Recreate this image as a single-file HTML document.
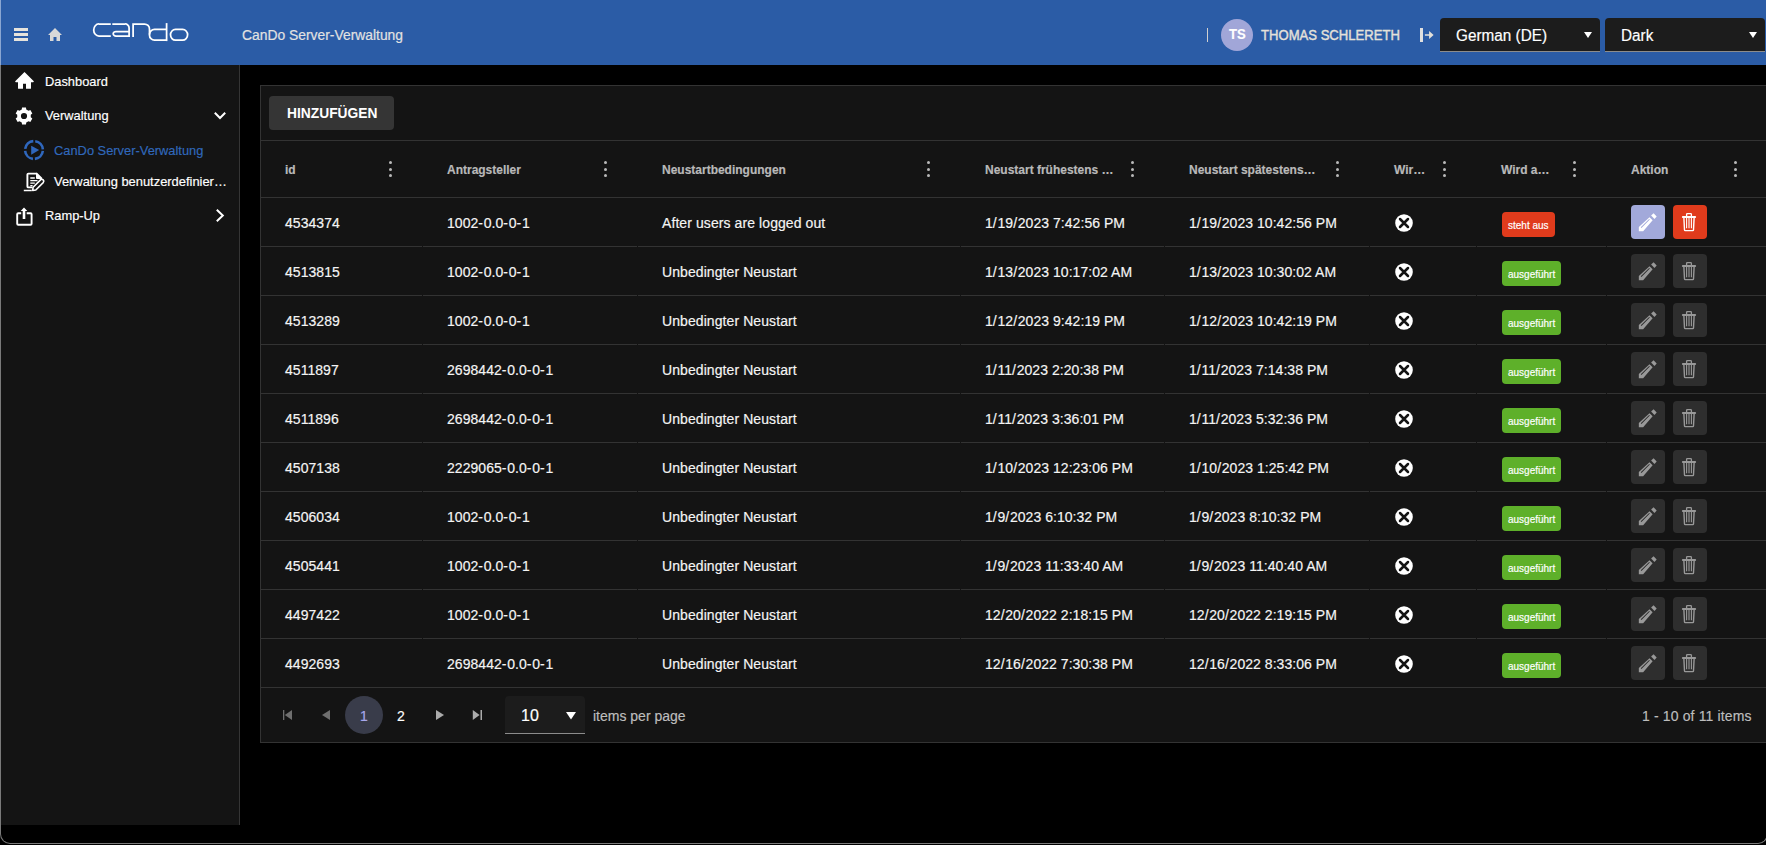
<!DOCTYPE html>
<html><head><meta charset="utf-8">
<style>
*{box-sizing:border-box;margin:0;padding:0}
html,body{width:1766px;height:845px;overflow:hidden;background:#000;font-family:"Liberation Sans",sans-serif;color:#f4f4f4}
.t{position:absolute;white-space:nowrap;line-height:1;-webkit-text-stroke-width:0.18px;}
.a{position:absolute}
svg{position:absolute;overflow:visible}
</style></head><body>

<div class="a" style="left:0;top:0;width:1768px;height:844px;border-left:1px solid #7a7a7a;border-right:1px solid #7a7a7a;border-bottom:1px solid #7a7a7a;border-radius:0 0 10px 10px;background:#000;overflow:hidden">
</div>
<div class="a" style="left:1px;top:0;width:1766px;height:65px;background:#2b5ca6"></div>
<div class="a" style="left:0;top:0;width:1px;height:65px;background:#8aa6d2"></div>
<div class="a" style="left:14px;top:28px;width:14px;height:3px;background:#e6e3dc"></div>
<div class="a" style="left:14px;top:33px;width:14px;height:3px;background:#e6e3dc"></div>
<div class="a" style="left:14px;top:38px;width:14px;height:3px;background:#e6e3dc"></div>
<svg style="left:48px;top:28px" width="14" height="13" viewBox="0 0 14 13"><path d="M7 0 L14 7 L12 7 L12 13 L8.5 13 L8.5 9 L5.5 9 L5.5 13 L2 13 L2 7 L0 7 Z" fill="#d9d9d9"/></svg>
<svg style="left:88px;top:18px" width="102" height="26" viewBox="0 0 102 26" fill="none" stroke="#fff" stroke-width="1.75">
<path d="M22.8,6 H11 A5.2,6 0 0 0 5.7,12 A5.2,6 0 0 0 11,18 H22.8"/>
<path d="M24.3,6 H37 A4,4 0 0 1 41.1,10 V18.9"/>
<path d="M41.1,13.5 H28 A2.8,2.25 0 0 0 25.2,15.75 A2.8,2.25 0 0 0 28,18 H41.1"/>
<path d="M45.1,18.9 V6 H56.5 A5,5 0 0 1 61.5,11 V17.2 A5,5 0 0 0 66.5,22.2 H78.6"/>
<path d="M78.6,11.4 H66.5 A5,5 0 0 0 61.5,16.4"/>
<path d="M78.6,5.1 V23.1"/>
<path d="M87.5,11.4 H94.6 A5,5.4 0 0 1 99.6,16.8 A5,5.4 0 0 1 94.6,22.2 H87.5 A5,5.4 0 0 1 82.5,16.8 A5,5.4 0 0 1 87.5,11.4 Z"/>
</svg>
<div class="t" style="left:242px;top:28.00px;font-size:14.490px;color:#e2e2e2;transform:scaleX(0.9570);transform-origin:0 0;">CanDo Server-Verwaltung</div>
<div class="a" style="left:1207px;top:28px;width:1px;height:14px;background:#d0d0d0"></div>
<div class="a" style="left:1221px;top:19px;width:32px;height:32px;border-radius:50%;background:#a1a6d8"></div>
<div class="t" style="left:1228.8px;top:27.00px;font-size:14.500px;color:#ffffff;font-weight:700;transform:scaleX(0.9000);transform-origin:0 0;">TS</div>
<div class="t" style="left:1261px;top:28.00px;font-size:14.000px;color:#e4e1da;transform:scaleX(0.935);transform-origin:0 0;-webkit-text-stroke-width:0.4px">THOMAS SCHLERETH</div>
<div class="a" style="left:1420px;top:28px;width:2.5px;height:14px;background:#e0e0e0"></div>
<svg style="left:1424px;top:30px" width="11" height="10" viewBox="0 0 11 10"><path d="M0.9 4.2 H5.5 V5.8 H0.9 Z M5.1 1 L9.6 4.95 L5.1 8.9 Z" fill="#e2e0da"/></svg>
<div class="a" style="left:1440px;top:18px;width:160px;height:34px;background:#1c1c1c;border-radius:4px 4px 0 0;border-bottom:1px solid #8c8c8c"></div>
<div class="t" style="left:1456px;top:28.00px;font-size:16.560px;color:#ffffff;transform:scaleX(0.9250);transform-origin:0 0;">German (DE)</div>
<svg style="left:1584px;top:32px" width="8" height="6" viewBox="0 0 8 6"><path d="M0 0 H8 L4 6 Z" fill="#fff"/></svg>
<div class="a" style="left:1605px;top:18px;width:160px;height:34px;background:#1c1c1c;border-radius:4px 4px 0 0;border-bottom:1px solid #8c8c8c"></div>
<div class="t" style="left:1621px;top:28.00px;font-size:16.560px;color:#ffffff;transform:scaleX(0.9250);transform-origin:0 0;">Dark</div>
<svg style="left:1749px;top:32px" width="8" height="6" viewBox="0 0 8 6"><path d="M0 0 H8 L4 6 Z" fill="#fff"/></svg>
<div class="a" style="left:1px;top:65px;width:239px;height:760px;background:#141414;border-right:1px solid #353535"></div>
<svg style="left:14.5px;top:72px" width="19" height="17" viewBox="0 0 19 17"><path d="M9.5 0 L18.8 9.3 Q18.9 10.3 18 10.3 H16 V16.3 Q16 16.8 15.5 16.8 H11 V11.8 H8 V16.8 H3.5 Q3 16.8 3 16.3 V10.3 H1 Q0.1 10.3 0.2 9.3 Z" fill="#fff"/></svg>
<div class="t" style="left:44.7px;top:75.00px;font-size:13.455px;color:#fff;transform:scaleX(0.9570);transform-origin:0 0;">Dashboard</div>
<svg style="left:15px;top:107.2px" width="18" height="18" viewBox="0 0 18 18"><path fill="#fff" fill-rule="evenodd" d="M6.75,2.48 L7.04,0.52 L10.96,0.52 L11.25,2.48 L13.53,3.79 L15.36,3.07 L17.32,6.46 L15.77,7.68 L15.77,10.32 L17.32,11.54 L15.36,14.93 L13.53,14.21 L11.25,15.52 L10.96,17.48 L7.04,17.48 L6.75,15.52 L4.47,14.21 L2.64,14.93 L0.68,11.54 L2.23,10.32 L2.23,7.68 L0.68,6.46 L2.64,3.07 L4.47,3.79 Z M12.1,9 A3.1,3.1 0 1 0 5.9,9 A3.1,3.1 0 1 0 12.1,9 Z"/></svg>
<div class="t" style="left:44.7px;top:109.00px;font-size:13.455px;color:#fff;transform:scaleX(0.9570);transform-origin:0 0;">Verwaltung</div>
<svg style="left:214px;top:112px" width="12" height="7" viewBox="0 0 12 7"><path d="M0.8 0.8 L6 6 L11.2 0.8" fill="none" stroke="#fff" stroke-width="2"/></svg>
<svg style="left:24px;top:140px" width="20" height="20" viewBox="0 0 20 20"><circle cx="10" cy="10" r="8.9" fill="none" stroke="#2f67bd" stroke-width="2.6" stroke-dasharray="11.98 2" stroke-dashoffset="12.98"/><path d="M7.2 5.7 L15.2 10 L7.2 14.8 Z" fill="#2f67bd"/></svg>
<div class="t" style="left:54px;top:144.00px;font-size:13.455px;color:#3068bb;transform:scaleX(0.9570);transform-origin:0 0;">CanDo Server-Verwaltung</div>
<svg style="left:23px;top:171px" width="23" height="22" viewBox="0 0 23 22"><path d="M9.4 16.4 H5.4 Q4.4 16.4 4.4 15.4 V3.6 Q4.4 2.6 5.4 2.6 H13.7 L18.2 7.1 V10.2" fill="none" stroke="#fff" stroke-width="1.9"/><path d="M13 1.6 L19.3 7.9 H14 Q13 7.9 13 6.9 Z" fill="#fff"/><path d="M7.3 7 H11.8 M7.3 9.6 H14.5 M7.3 12.2 H11.8 M7.3 14.7 H9.6" stroke="#fff" stroke-width="1.3"/><path d="M0.8 19.5 H8.8" stroke="#fff" stroke-width="1.5"/><path d="M9.7 19.4 L10.1 16.3 L17.5 8.9 A1.91 1.91 0 0 1 20.2 11.6 L12.8 19 Z" fill="#141414" stroke="#fff" stroke-width="1.6" stroke-linejoin="round"/></svg>
<div class="t" style="left:54px;top:175.00px;font-size:13.455px;color:#fff;transform:scaleX(0.9600);transform-origin:0 0;">Verwaltung benutzerdefinier…</div>
<svg style="left:15px;top:207px" width="18" height="20" viewBox="0 0 18 20"><path d="M6.2 6.3 H3.2 Q2.2 6.3 2.2 7.3 V16.8 Q2.2 17.8 3.2 17.8 H15.6 Q16.6 17.8 16.6 16.8 V7.3 Q16.6 6.3 15.6 6.3 H11.7" fill="none" stroke="#fff" stroke-width="1.9"/><path d="M9 0.6 L12.3 4 H10.3 V12 H7.7 V4 H5.7 Z" fill="#fff"/></svg>
<div class="t" style="left:44.7px;top:209.00px;font-size:13.455px;color:#fff;transform:scaleX(0.9570);transform-origin:0 0;">Ramp-Up</div>
<svg style="left:216px;top:209px" width="8" height="13" viewBox="0 0 8 13"><path d="M0.8 0.8 L6.8 6.5 L0.8 12.2" fill="none" stroke="#fff" stroke-width="2"/></svg>
<div class="a" style="left:260px;top:85px;width:1520px;height:658px;background:#141414;border:1px solid #333333"></div>
<div class="a" style="left:269px;top:96px;width:125px;height:34px;background:#353535;border-radius:4px"></div>
<div class="t" style="left:286.6px;top:106.00px;font-size:14.600px;color:#ffffff;font-weight:700;transform:scaleX(0.945);transform-origin:0 0;-webkit-text-stroke-width:0">HINZUFÜGEN</div>
<div class="a" style="left:261px;top:140px;width:1510px;height:1px;background:#333333"></div>
<div class="a" style="left:261px;top:197px;width:1510px;height:1px;background:#333333"></div>
<div class="a" style="left:261px;top:246px;width:1510px;height:1px;background:#333333"></div>
<div class="a" style="left:261px;top:295px;width:1510px;height:1px;background:#333333"></div>
<div class="a" style="left:261px;top:344px;width:1510px;height:1px;background:#333333"></div>
<div class="a" style="left:261px;top:393px;width:1510px;height:1px;background:#333333"></div>
<div class="a" style="left:261px;top:442px;width:1510px;height:1px;background:#333333"></div>
<div class="a" style="left:261px;top:491px;width:1510px;height:1px;background:#333333"></div>
<div class="a" style="left:261px;top:540px;width:1510px;height:1px;background:#333333"></div>
<div class="a" style="left:261px;top:589px;width:1510px;height:1px;background:#333333"></div>
<div class="a" style="left:261px;top:638px;width:1510px;height:1px;background:#333333"></div>
<div class="a" style="left:261px;top:687px;width:1510px;height:1px;background:#333333"></div>
<div class="a" style="left:422px;top:246px;width:1px;height:1px;background:#141414"></div>
<div class="a" style="left:637px;top:246px;width:1px;height:1px;background:#141414"></div>
<div class="a" style="left:960px;top:246px;width:1px;height:1px;background:#141414"></div>
<div class="a" style="left:1164px;top:246px;width:1px;height:1px;background:#141414"></div>
<div class="a" style="left:1369px;top:246px;width:1px;height:1px;background:#141414"></div>
<div class="a" style="left:1476px;top:246px;width:1px;height:1px;background:#141414"></div>
<div class="a" style="left:1606px;top:246px;width:1px;height:1px;background:#141414"></div>
<div class="a" style="left:422px;top:295px;width:1px;height:1px;background:#141414"></div>
<div class="a" style="left:637px;top:295px;width:1px;height:1px;background:#141414"></div>
<div class="a" style="left:960px;top:295px;width:1px;height:1px;background:#141414"></div>
<div class="a" style="left:1164px;top:295px;width:1px;height:1px;background:#141414"></div>
<div class="a" style="left:1369px;top:295px;width:1px;height:1px;background:#141414"></div>
<div class="a" style="left:1476px;top:295px;width:1px;height:1px;background:#141414"></div>
<div class="a" style="left:1606px;top:295px;width:1px;height:1px;background:#141414"></div>
<div class="a" style="left:422px;top:344px;width:1px;height:1px;background:#141414"></div>
<div class="a" style="left:637px;top:344px;width:1px;height:1px;background:#141414"></div>
<div class="a" style="left:960px;top:344px;width:1px;height:1px;background:#141414"></div>
<div class="a" style="left:1164px;top:344px;width:1px;height:1px;background:#141414"></div>
<div class="a" style="left:1369px;top:344px;width:1px;height:1px;background:#141414"></div>
<div class="a" style="left:1476px;top:344px;width:1px;height:1px;background:#141414"></div>
<div class="a" style="left:1606px;top:344px;width:1px;height:1px;background:#141414"></div>
<div class="a" style="left:422px;top:393px;width:1px;height:1px;background:#141414"></div>
<div class="a" style="left:637px;top:393px;width:1px;height:1px;background:#141414"></div>
<div class="a" style="left:960px;top:393px;width:1px;height:1px;background:#141414"></div>
<div class="a" style="left:1164px;top:393px;width:1px;height:1px;background:#141414"></div>
<div class="a" style="left:1369px;top:393px;width:1px;height:1px;background:#141414"></div>
<div class="a" style="left:1476px;top:393px;width:1px;height:1px;background:#141414"></div>
<div class="a" style="left:1606px;top:393px;width:1px;height:1px;background:#141414"></div>
<div class="a" style="left:422px;top:442px;width:1px;height:1px;background:#141414"></div>
<div class="a" style="left:637px;top:442px;width:1px;height:1px;background:#141414"></div>
<div class="a" style="left:960px;top:442px;width:1px;height:1px;background:#141414"></div>
<div class="a" style="left:1164px;top:442px;width:1px;height:1px;background:#141414"></div>
<div class="a" style="left:1369px;top:442px;width:1px;height:1px;background:#141414"></div>
<div class="a" style="left:1476px;top:442px;width:1px;height:1px;background:#141414"></div>
<div class="a" style="left:1606px;top:442px;width:1px;height:1px;background:#141414"></div>
<div class="a" style="left:422px;top:491px;width:1px;height:1px;background:#141414"></div>
<div class="a" style="left:637px;top:491px;width:1px;height:1px;background:#141414"></div>
<div class="a" style="left:960px;top:491px;width:1px;height:1px;background:#141414"></div>
<div class="a" style="left:1164px;top:491px;width:1px;height:1px;background:#141414"></div>
<div class="a" style="left:1369px;top:491px;width:1px;height:1px;background:#141414"></div>
<div class="a" style="left:1476px;top:491px;width:1px;height:1px;background:#141414"></div>
<div class="a" style="left:1606px;top:491px;width:1px;height:1px;background:#141414"></div>
<div class="a" style="left:422px;top:540px;width:1px;height:1px;background:#141414"></div>
<div class="a" style="left:637px;top:540px;width:1px;height:1px;background:#141414"></div>
<div class="a" style="left:960px;top:540px;width:1px;height:1px;background:#141414"></div>
<div class="a" style="left:1164px;top:540px;width:1px;height:1px;background:#141414"></div>
<div class="a" style="left:1369px;top:540px;width:1px;height:1px;background:#141414"></div>
<div class="a" style="left:1476px;top:540px;width:1px;height:1px;background:#141414"></div>
<div class="a" style="left:1606px;top:540px;width:1px;height:1px;background:#141414"></div>
<div class="a" style="left:422px;top:589px;width:1px;height:1px;background:#141414"></div>
<div class="a" style="left:637px;top:589px;width:1px;height:1px;background:#141414"></div>
<div class="a" style="left:960px;top:589px;width:1px;height:1px;background:#141414"></div>
<div class="a" style="left:1164px;top:589px;width:1px;height:1px;background:#141414"></div>
<div class="a" style="left:1369px;top:589px;width:1px;height:1px;background:#141414"></div>
<div class="a" style="left:1476px;top:589px;width:1px;height:1px;background:#141414"></div>
<div class="a" style="left:1606px;top:589px;width:1px;height:1px;background:#141414"></div>
<div class="a" style="left:422px;top:638px;width:1px;height:1px;background:#141414"></div>
<div class="a" style="left:637px;top:638px;width:1px;height:1px;background:#141414"></div>
<div class="a" style="left:960px;top:638px;width:1px;height:1px;background:#141414"></div>
<div class="a" style="left:1164px;top:638px;width:1px;height:1px;background:#141414"></div>
<div class="a" style="left:1369px;top:638px;width:1px;height:1px;background:#141414"></div>
<div class="a" style="left:1476px;top:638px;width:1px;height:1px;background:#141414"></div>
<div class="a" style="left:1606px;top:638px;width:1px;height:1px;background:#141414"></div>
<div class="t" style="left:285px;top:164.00px;font-size:12.420px;color:#b9b9b9;font-weight:700;transform:scaleX(0.9662);transform-origin:0 0;">id</div>
<div class="a" style="left:389.3px;top:161.2px;width:3.2px;height:3.2px;border-radius:50%;background:#b9b9b9"></div>
<div class="a" style="left:389.3px;top:167.5px;width:3.2px;height:3.2px;border-radius:50%;background:#b9b9b9"></div>
<div class="a" style="left:389.3px;top:173.79999999999998px;width:3.2px;height:3.2px;border-radius:50%;background:#b9b9b9"></div>
<div class="t" style="left:447px;top:164.00px;font-size:12.420px;color:#b9b9b9;font-weight:700;transform:scaleX(0.9662);transform-origin:0 0;">Antragsteller</div>
<div class="a" style="left:604.3px;top:161.2px;width:3.2px;height:3.2px;border-radius:50%;background:#b9b9b9"></div>
<div class="a" style="left:604.3px;top:167.5px;width:3.2px;height:3.2px;border-radius:50%;background:#b9b9b9"></div>
<div class="a" style="left:604.3px;top:173.79999999999998px;width:3.2px;height:3.2px;border-radius:50%;background:#b9b9b9"></div>
<div class="t" style="left:662px;top:164.00px;font-size:12.420px;color:#b9b9b9;font-weight:700;transform:scaleX(0.9662);transform-origin:0 0;">Neustartbedingungen</div>
<div class="a" style="left:927.3px;top:161.2px;width:3.2px;height:3.2px;border-radius:50%;background:#b9b9b9"></div>
<div class="a" style="left:927.3px;top:167.5px;width:3.2px;height:3.2px;border-radius:50%;background:#b9b9b9"></div>
<div class="a" style="left:927.3px;top:173.79999999999998px;width:3.2px;height:3.2px;border-radius:50%;background:#b9b9b9"></div>
<div class="t" style="left:985px;top:164.00px;font-size:12.420px;color:#b9b9b9;font-weight:700;transform:scaleX(0.9662);transform-origin:0 0;">Neustart frühestens …</div>
<div class="a" style="left:1131.3px;top:161.2px;width:3.2px;height:3.2px;border-radius:50%;background:#b9b9b9"></div>
<div class="a" style="left:1131.3px;top:167.5px;width:3.2px;height:3.2px;border-radius:50%;background:#b9b9b9"></div>
<div class="a" style="left:1131.3px;top:173.79999999999998px;width:3.2px;height:3.2px;border-radius:50%;background:#b9b9b9"></div>
<div class="t" style="left:1189px;top:164.00px;font-size:12.420px;color:#b9b9b9;font-weight:700;transform:scaleX(0.9662);transform-origin:0 0;">Neustart spätestens…</div>
<div class="a" style="left:1336.3px;top:161.2px;width:3.2px;height:3.2px;border-radius:50%;background:#b9b9b9"></div>
<div class="a" style="left:1336.3px;top:167.5px;width:3.2px;height:3.2px;border-radius:50%;background:#b9b9b9"></div>
<div class="a" style="left:1336.3px;top:173.79999999999998px;width:3.2px;height:3.2px;border-radius:50%;background:#b9b9b9"></div>
<div class="t" style="left:1394px;top:164.00px;font-size:12.420px;color:#b9b9b9;font-weight:700;transform:scaleX(0.9662);transform-origin:0 0;">Wir…</div>
<div class="a" style="left:1443.3px;top:161.2px;width:3.2px;height:3.2px;border-radius:50%;background:#b9b9b9"></div>
<div class="a" style="left:1443.3px;top:167.5px;width:3.2px;height:3.2px;border-radius:50%;background:#b9b9b9"></div>
<div class="a" style="left:1443.3px;top:173.79999999999998px;width:3.2px;height:3.2px;border-radius:50%;background:#b9b9b9"></div>
<div class="t" style="left:1501px;top:164.00px;font-size:12.420px;color:#b9b9b9;font-weight:700;transform:scaleX(0.9662);transform-origin:0 0;">Wird a…</div>
<div class="a" style="left:1573.3px;top:161.2px;width:3.2px;height:3.2px;border-radius:50%;background:#b9b9b9"></div>
<div class="a" style="left:1573.3px;top:167.5px;width:3.2px;height:3.2px;border-radius:50%;background:#b9b9b9"></div>
<div class="a" style="left:1573.3px;top:173.79999999999998px;width:3.2px;height:3.2px;border-radius:50%;background:#b9b9b9"></div>
<div class="t" style="left:1631px;top:164.00px;font-size:12.420px;color:#b9b9b9;font-weight:700;transform:scaleX(0.9662);transform-origin:0 0;">Aktion</div>
<div class="a" style="left:1734.3px;top:161.2px;width:3.2px;height:3.2px;border-radius:50%;background:#b9b9b9"></div>
<div class="a" style="left:1734.3px;top:167.5px;width:3.2px;height:3.2px;border-radius:50%;background:#b9b9b9"></div>
<div class="a" style="left:1734.3px;top:173.79999999999998px;width:3.2px;height:3.2px;border-radius:50%;background:#b9b9b9"></div>
<div class="t" style="left:285px;top:216.00px;font-size:14.490px;color:#f4f4f4;transform:scaleX(0.9662);transform-origin:0 0;letter-spacing:0.05px">4534374</div>
<div class="t" style="left:447px;top:216.00px;font-size:14.490px;color:#f4f4f4;transform:scaleX(0.9662);transform-origin:0 0;letter-spacing:0.05px">1002<span style="letter-spacing:0.75px">-</span>0.0<span style="letter-spacing:0.75px">-</span>0<span style="letter-spacing:0.75px">-</span>1</div>
<div class="t" style="left:662px;top:216.00px;font-size:14.490px;color:#f4f4f4;transform:scaleX(0.9662);transform-origin:0 0;letter-spacing:0.09px">After users are logged out</div>
<div class="t" style="left:985px;top:216.00px;font-size:14.490px;color:#f4f4f4;transform:scaleX(0.9662);transform-origin:0 0;letter-spacing:0.05px">1<span style="letter-spacing:0.75px">/</span>19<span style="letter-spacing:0.75px">/</span>2023 7:42:56 PM</div>
<div class="t" style="left:1189px;top:216.00px;font-size:14.490px;color:#f4f4f4;transform:scaleX(0.9662);transform-origin:0 0;letter-spacing:0.05px">1<span style="letter-spacing:0.75px">/</span>19<span style="letter-spacing:0.75px">/</span>2023 10:42:56 PM</div>
<svg style="left:1395px;top:214px" width="18" height="18" viewBox="0 0 18 18"><circle cx="9" cy="9" r="8.8" fill="#fff"/><path d="M5 5 L13 13 M13 5 L5 13" stroke="#141414" stroke-width="2.5" stroke-linecap="round"/></svg>
<div class="a" style="left:1502px;top:212px;width:53px;height:25px;background:#e03b1c;border-radius:4px"></div>
<div class="t" style="left:1507.6px;top:221.00px;font-size:10.350px;color:#fff;transform:scaleX(0.9662);transform-origin:0 0;">steht aus</div>
<div class="a" style="left:1631px;top:205px;width:34px;height:34px;background:#a2a9da;border-radius:4px"></div>
<div class="a" style="left:1673px;top:205px;width:34px;height:34px;background:#e03b1c;border-radius:4px"></div>
<svg style="left:1639px;top:213px" width="18" height="19" viewBox="0 0 18 19"><path fill-rule="evenodd" d="M10.48 4.14 L13.65 7.31 L4.14 18.18 H-0.17 V14.1 Z M1.75 14.3 L10.15 5.9 L10.85 6.6 L2.45 15 Z" fill="#ffffff"/><path d="M14.6 0.3 L17.7 3.5 L15.5 6 L12.1 2.6 Z" fill="#ffffff"/></svg>
<svg style="left:1682px;top:213px" width="14" height="19" viewBox="0 0 14 19" fill="none" stroke="#ffffff"><path d="M4.6 3 V1.4 Q4.6 0.6 5.4 0.6 H8.6 Q9.4 0.6 9.4 1.4 V3" stroke-width="1.3"/><path d="M0.9 4 H13.1" stroke-width="2" stroke-linecap="round"/><path d="M1.9 5 L2.5 17 Q2.6 17.6 3.2 17.6 H10.8 Q11.4 17.6 11.5 17 L12.1 5" stroke-width="1.4"/><path d="M4.6 5 V15.2 M7 5 V15.2 M9.4 5 V15.2" stroke-width="1.1"/></svg>
<div class="t" style="left:285px;top:265.00px;font-size:14.490px;color:#f4f4f4;transform:scaleX(0.9662);transform-origin:0 0;letter-spacing:0.05px">4513815</div>
<div class="t" style="left:447px;top:265.00px;font-size:14.490px;color:#f4f4f4;transform:scaleX(0.9662);transform-origin:0 0;letter-spacing:0.05px">1002<span style="letter-spacing:0.75px">-</span>0.0<span style="letter-spacing:0.75px">-</span>0<span style="letter-spacing:0.75px">-</span>1</div>
<div class="t" style="left:662px;top:265.00px;font-size:14.490px;color:#f4f4f4;transform:scaleX(0.9662);transform-origin:0 0;letter-spacing:0.09px">Unbedingter Neustart</div>
<div class="t" style="left:985px;top:265.00px;font-size:14.490px;color:#f4f4f4;transform:scaleX(0.9662);transform-origin:0 0;letter-spacing:0.05px">1<span style="letter-spacing:0.75px">/</span>13<span style="letter-spacing:0.75px">/</span>2023 10:17:02 AM</div>
<div class="t" style="left:1189px;top:265.00px;font-size:14.490px;color:#f4f4f4;transform:scaleX(0.9662);transform-origin:0 0;letter-spacing:0.05px">1<span style="letter-spacing:0.75px">/</span>13<span style="letter-spacing:0.75px">/</span>2023 10:30:02 AM</div>
<svg style="left:1395px;top:263px" width="18" height="18" viewBox="0 0 18 18"><circle cx="9" cy="9" r="8.8" fill="#fff"/><path d="M5 5 L13 13 M13 5 L5 13" stroke="#141414" stroke-width="2.5" stroke-linecap="round"/></svg>
<div class="a" style="left:1502px;top:261px;width:59px;height:25px;background:#5eb02a;border-radius:4px"></div>
<div class="t" style="left:1507.6px;top:270.00px;font-size:10.350px;color:#fff;transform:scaleX(0.9662);transform-origin:0 0;">ausgeführt</div>
<div class="a" style="left:1631px;top:254px;width:34px;height:34px;background:#2e2e2e;border-radius:4px"></div>
<div class="a" style="left:1673px;top:254px;width:34px;height:34px;background:#2e2e2e;border-radius:4px"></div>
<svg style="left:1639px;top:262px" width="18" height="19" viewBox="0 0 18 19"><path fill-rule="evenodd" d="M10.48 4.14 L13.65 7.31 L4.14 18.18 H-0.17 V14.1 Z M1.75 14.3 L10.15 5.9 L10.85 6.6 L2.45 15 Z" fill="#999999"/><path d="M14.6 0.3 L17.7 3.5 L15.5 6 L12.1 2.6 Z" fill="#999999"/></svg>
<svg style="left:1682px;top:262px" width="14" height="19" viewBox="0 0 14 19" fill="none" stroke="#999999"><path d="M4.6 3 V1.4 Q4.6 0.6 5.4 0.6 H8.6 Q9.4 0.6 9.4 1.4 V3" stroke-width="1.3"/><path d="M0.9 4 H13.1" stroke-width="2" stroke-linecap="round"/><path d="M1.9 5 L2.5 17 Q2.6 17.6 3.2 17.6 H10.8 Q11.4 17.6 11.5 17 L12.1 5" stroke-width="1.4"/><path d="M4.6 5 V15.2 M7 5 V15.2 M9.4 5 V15.2" stroke-width="1.1"/></svg>
<div class="t" style="left:285px;top:314.00px;font-size:14.490px;color:#f4f4f4;transform:scaleX(0.9662);transform-origin:0 0;letter-spacing:0.05px">4513289</div>
<div class="t" style="left:447px;top:314.00px;font-size:14.490px;color:#f4f4f4;transform:scaleX(0.9662);transform-origin:0 0;letter-spacing:0.05px">1002<span style="letter-spacing:0.75px">-</span>0.0<span style="letter-spacing:0.75px">-</span>0<span style="letter-spacing:0.75px">-</span>1</div>
<div class="t" style="left:662px;top:314.00px;font-size:14.490px;color:#f4f4f4;transform:scaleX(0.9662);transform-origin:0 0;letter-spacing:0.09px">Unbedingter Neustart</div>
<div class="t" style="left:985px;top:314.00px;font-size:14.490px;color:#f4f4f4;transform:scaleX(0.9662);transform-origin:0 0;letter-spacing:0.05px">1<span style="letter-spacing:0.75px">/</span>12<span style="letter-spacing:0.75px">/</span>2023 9:42:19 PM</div>
<div class="t" style="left:1189px;top:314.00px;font-size:14.490px;color:#f4f4f4;transform:scaleX(0.9662);transform-origin:0 0;letter-spacing:0.05px">1<span style="letter-spacing:0.75px">/</span>12<span style="letter-spacing:0.75px">/</span>2023 10:42:19 PM</div>
<svg style="left:1395px;top:312px" width="18" height="18" viewBox="0 0 18 18"><circle cx="9" cy="9" r="8.8" fill="#fff"/><path d="M5 5 L13 13 M13 5 L5 13" stroke="#141414" stroke-width="2.5" stroke-linecap="round"/></svg>
<div class="a" style="left:1502px;top:310px;width:59px;height:25px;background:#5eb02a;border-radius:4px"></div>
<div class="t" style="left:1507.6px;top:319.00px;font-size:10.350px;color:#fff;transform:scaleX(0.9662);transform-origin:0 0;">ausgeführt</div>
<div class="a" style="left:1631px;top:303px;width:34px;height:34px;background:#2e2e2e;border-radius:4px"></div>
<div class="a" style="left:1673px;top:303px;width:34px;height:34px;background:#2e2e2e;border-radius:4px"></div>
<svg style="left:1639px;top:311px" width="18" height="19" viewBox="0 0 18 19"><path fill-rule="evenodd" d="M10.48 4.14 L13.65 7.31 L4.14 18.18 H-0.17 V14.1 Z M1.75 14.3 L10.15 5.9 L10.85 6.6 L2.45 15 Z" fill="#999999"/><path d="M14.6 0.3 L17.7 3.5 L15.5 6 L12.1 2.6 Z" fill="#999999"/></svg>
<svg style="left:1682px;top:311px" width="14" height="19" viewBox="0 0 14 19" fill="none" stroke="#999999"><path d="M4.6 3 V1.4 Q4.6 0.6 5.4 0.6 H8.6 Q9.4 0.6 9.4 1.4 V3" stroke-width="1.3"/><path d="M0.9 4 H13.1" stroke-width="2" stroke-linecap="round"/><path d="M1.9 5 L2.5 17 Q2.6 17.6 3.2 17.6 H10.8 Q11.4 17.6 11.5 17 L12.1 5" stroke-width="1.4"/><path d="M4.6 5 V15.2 M7 5 V15.2 M9.4 5 V15.2" stroke-width="1.1"/></svg>
<div class="t" style="left:285px;top:363.00px;font-size:14.490px;color:#f4f4f4;transform:scaleX(0.9662);transform-origin:0 0;letter-spacing:0.05px">4511897</div>
<div class="t" style="left:447px;top:363.00px;font-size:14.490px;color:#f4f4f4;transform:scaleX(0.9662);transform-origin:0 0;letter-spacing:0.05px">2698442<span style="letter-spacing:0.75px">-</span>0.0<span style="letter-spacing:0.75px">-</span>0<span style="letter-spacing:0.75px">-</span>1</div>
<div class="t" style="left:662px;top:363.00px;font-size:14.490px;color:#f4f4f4;transform:scaleX(0.9662);transform-origin:0 0;letter-spacing:0.09px">Unbedingter Neustart</div>
<div class="t" style="left:985px;top:363.00px;font-size:14.490px;color:#f4f4f4;transform:scaleX(0.9662);transform-origin:0 0;letter-spacing:0.05px">1<span style="letter-spacing:0.75px">/</span>11<span style="letter-spacing:0.75px">/</span>2023 2:20:38 PM</div>
<div class="t" style="left:1189px;top:363.00px;font-size:14.490px;color:#f4f4f4;transform:scaleX(0.9662);transform-origin:0 0;letter-spacing:0.05px">1<span style="letter-spacing:0.75px">/</span>11<span style="letter-spacing:0.75px">/</span>2023 7:14:38 PM</div>
<svg style="left:1395px;top:361px" width="18" height="18" viewBox="0 0 18 18"><circle cx="9" cy="9" r="8.8" fill="#fff"/><path d="M5 5 L13 13 M13 5 L5 13" stroke="#141414" stroke-width="2.5" stroke-linecap="round"/></svg>
<div class="a" style="left:1502px;top:359px;width:59px;height:25px;background:#5eb02a;border-radius:4px"></div>
<div class="t" style="left:1507.6px;top:368.00px;font-size:10.350px;color:#fff;transform:scaleX(0.9662);transform-origin:0 0;">ausgeführt</div>
<div class="a" style="left:1631px;top:352px;width:34px;height:34px;background:#2e2e2e;border-radius:4px"></div>
<div class="a" style="left:1673px;top:352px;width:34px;height:34px;background:#2e2e2e;border-radius:4px"></div>
<svg style="left:1639px;top:360px" width="18" height="19" viewBox="0 0 18 19"><path fill-rule="evenodd" d="M10.48 4.14 L13.65 7.31 L4.14 18.18 H-0.17 V14.1 Z M1.75 14.3 L10.15 5.9 L10.85 6.6 L2.45 15 Z" fill="#999999"/><path d="M14.6 0.3 L17.7 3.5 L15.5 6 L12.1 2.6 Z" fill="#999999"/></svg>
<svg style="left:1682px;top:360px" width="14" height="19" viewBox="0 0 14 19" fill="none" stroke="#999999"><path d="M4.6 3 V1.4 Q4.6 0.6 5.4 0.6 H8.6 Q9.4 0.6 9.4 1.4 V3" stroke-width="1.3"/><path d="M0.9 4 H13.1" stroke-width="2" stroke-linecap="round"/><path d="M1.9 5 L2.5 17 Q2.6 17.6 3.2 17.6 H10.8 Q11.4 17.6 11.5 17 L12.1 5" stroke-width="1.4"/><path d="M4.6 5 V15.2 M7 5 V15.2 M9.4 5 V15.2" stroke-width="1.1"/></svg>
<div class="t" style="left:285px;top:412.00px;font-size:14.490px;color:#f4f4f4;transform:scaleX(0.9662);transform-origin:0 0;letter-spacing:0.05px">4511896</div>
<div class="t" style="left:447px;top:412.00px;font-size:14.490px;color:#f4f4f4;transform:scaleX(0.9662);transform-origin:0 0;letter-spacing:0.05px">2698442<span style="letter-spacing:0.75px">-</span>0.0<span style="letter-spacing:0.75px">-</span>0<span style="letter-spacing:0.75px">-</span>1</div>
<div class="t" style="left:662px;top:412.00px;font-size:14.490px;color:#f4f4f4;transform:scaleX(0.9662);transform-origin:0 0;letter-spacing:0.09px">Unbedingter Neustart</div>
<div class="t" style="left:985px;top:412.00px;font-size:14.490px;color:#f4f4f4;transform:scaleX(0.9662);transform-origin:0 0;letter-spacing:0.05px">1<span style="letter-spacing:0.75px">/</span>11<span style="letter-spacing:0.75px">/</span>2023 3:36:01 PM</div>
<div class="t" style="left:1189px;top:412.00px;font-size:14.490px;color:#f4f4f4;transform:scaleX(0.9662);transform-origin:0 0;letter-spacing:0.05px">1<span style="letter-spacing:0.75px">/</span>11<span style="letter-spacing:0.75px">/</span>2023 5:32:36 PM</div>
<svg style="left:1395px;top:410px" width="18" height="18" viewBox="0 0 18 18"><circle cx="9" cy="9" r="8.8" fill="#fff"/><path d="M5 5 L13 13 M13 5 L5 13" stroke="#141414" stroke-width="2.5" stroke-linecap="round"/></svg>
<div class="a" style="left:1502px;top:408px;width:59px;height:25px;background:#5eb02a;border-radius:4px"></div>
<div class="t" style="left:1507.6px;top:417.00px;font-size:10.350px;color:#fff;transform:scaleX(0.9662);transform-origin:0 0;">ausgeführt</div>
<div class="a" style="left:1631px;top:401px;width:34px;height:34px;background:#2e2e2e;border-radius:4px"></div>
<div class="a" style="left:1673px;top:401px;width:34px;height:34px;background:#2e2e2e;border-radius:4px"></div>
<svg style="left:1639px;top:409px" width="18" height="19" viewBox="0 0 18 19"><path fill-rule="evenodd" d="M10.48 4.14 L13.65 7.31 L4.14 18.18 H-0.17 V14.1 Z M1.75 14.3 L10.15 5.9 L10.85 6.6 L2.45 15 Z" fill="#999999"/><path d="M14.6 0.3 L17.7 3.5 L15.5 6 L12.1 2.6 Z" fill="#999999"/></svg>
<svg style="left:1682px;top:409px" width="14" height="19" viewBox="0 0 14 19" fill="none" stroke="#999999"><path d="M4.6 3 V1.4 Q4.6 0.6 5.4 0.6 H8.6 Q9.4 0.6 9.4 1.4 V3" stroke-width="1.3"/><path d="M0.9 4 H13.1" stroke-width="2" stroke-linecap="round"/><path d="M1.9 5 L2.5 17 Q2.6 17.6 3.2 17.6 H10.8 Q11.4 17.6 11.5 17 L12.1 5" stroke-width="1.4"/><path d="M4.6 5 V15.2 M7 5 V15.2 M9.4 5 V15.2" stroke-width="1.1"/></svg>
<div class="t" style="left:285px;top:461.00px;font-size:14.490px;color:#f4f4f4;transform:scaleX(0.9662);transform-origin:0 0;letter-spacing:0.05px">4507138</div>
<div class="t" style="left:447px;top:461.00px;font-size:14.490px;color:#f4f4f4;transform:scaleX(0.9662);transform-origin:0 0;letter-spacing:0.05px">2229065<span style="letter-spacing:0.75px">-</span>0.0<span style="letter-spacing:0.75px">-</span>0<span style="letter-spacing:0.75px">-</span>1</div>
<div class="t" style="left:662px;top:461.00px;font-size:14.490px;color:#f4f4f4;transform:scaleX(0.9662);transform-origin:0 0;letter-spacing:0.09px">Unbedingter Neustart</div>
<div class="t" style="left:985px;top:461.00px;font-size:14.490px;color:#f4f4f4;transform:scaleX(0.9662);transform-origin:0 0;letter-spacing:0.05px">1<span style="letter-spacing:0.75px">/</span>10<span style="letter-spacing:0.75px">/</span>2023 12:23:06 PM</div>
<div class="t" style="left:1189px;top:461.00px;font-size:14.490px;color:#f4f4f4;transform:scaleX(0.9662);transform-origin:0 0;letter-spacing:0.05px">1<span style="letter-spacing:0.75px">/</span>10<span style="letter-spacing:0.75px">/</span>2023 1:25:42 PM</div>
<svg style="left:1395px;top:459px" width="18" height="18" viewBox="0 0 18 18"><circle cx="9" cy="9" r="8.8" fill="#fff"/><path d="M5 5 L13 13 M13 5 L5 13" stroke="#141414" stroke-width="2.5" stroke-linecap="round"/></svg>
<div class="a" style="left:1502px;top:457px;width:59px;height:25px;background:#5eb02a;border-radius:4px"></div>
<div class="t" style="left:1507.6px;top:466.00px;font-size:10.350px;color:#fff;transform:scaleX(0.9662);transform-origin:0 0;">ausgeführt</div>
<div class="a" style="left:1631px;top:450px;width:34px;height:34px;background:#2e2e2e;border-radius:4px"></div>
<div class="a" style="left:1673px;top:450px;width:34px;height:34px;background:#2e2e2e;border-radius:4px"></div>
<svg style="left:1639px;top:458px" width="18" height="19" viewBox="0 0 18 19"><path fill-rule="evenodd" d="M10.48 4.14 L13.65 7.31 L4.14 18.18 H-0.17 V14.1 Z M1.75 14.3 L10.15 5.9 L10.85 6.6 L2.45 15 Z" fill="#999999"/><path d="M14.6 0.3 L17.7 3.5 L15.5 6 L12.1 2.6 Z" fill="#999999"/></svg>
<svg style="left:1682px;top:458px" width="14" height="19" viewBox="0 0 14 19" fill="none" stroke="#999999"><path d="M4.6 3 V1.4 Q4.6 0.6 5.4 0.6 H8.6 Q9.4 0.6 9.4 1.4 V3" stroke-width="1.3"/><path d="M0.9 4 H13.1" stroke-width="2" stroke-linecap="round"/><path d="M1.9 5 L2.5 17 Q2.6 17.6 3.2 17.6 H10.8 Q11.4 17.6 11.5 17 L12.1 5" stroke-width="1.4"/><path d="M4.6 5 V15.2 M7 5 V15.2 M9.4 5 V15.2" stroke-width="1.1"/></svg>
<div class="t" style="left:285px;top:510.00px;font-size:14.490px;color:#f4f4f4;transform:scaleX(0.9662);transform-origin:0 0;letter-spacing:0.05px">4506034</div>
<div class="t" style="left:447px;top:510.00px;font-size:14.490px;color:#f4f4f4;transform:scaleX(0.9662);transform-origin:0 0;letter-spacing:0.05px">1002<span style="letter-spacing:0.75px">-</span>0.0<span style="letter-spacing:0.75px">-</span>0<span style="letter-spacing:0.75px">-</span>1</div>
<div class="t" style="left:662px;top:510.00px;font-size:14.490px;color:#f4f4f4;transform:scaleX(0.9662);transform-origin:0 0;letter-spacing:0.09px">Unbedingter Neustart</div>
<div class="t" style="left:985px;top:510.00px;font-size:14.490px;color:#f4f4f4;transform:scaleX(0.9662);transform-origin:0 0;letter-spacing:0.05px">1<span style="letter-spacing:0.75px">/</span>9<span style="letter-spacing:0.75px">/</span>2023 6:10:32 PM</div>
<div class="t" style="left:1189px;top:510.00px;font-size:14.490px;color:#f4f4f4;transform:scaleX(0.9662);transform-origin:0 0;letter-spacing:0.05px">1<span style="letter-spacing:0.75px">/</span>9<span style="letter-spacing:0.75px">/</span>2023 8:10:32 PM</div>
<svg style="left:1395px;top:508px" width="18" height="18" viewBox="0 0 18 18"><circle cx="9" cy="9" r="8.8" fill="#fff"/><path d="M5 5 L13 13 M13 5 L5 13" stroke="#141414" stroke-width="2.5" stroke-linecap="round"/></svg>
<div class="a" style="left:1502px;top:506px;width:59px;height:25px;background:#5eb02a;border-radius:4px"></div>
<div class="t" style="left:1507.6px;top:515.00px;font-size:10.350px;color:#fff;transform:scaleX(0.9662);transform-origin:0 0;">ausgeführt</div>
<div class="a" style="left:1631px;top:499px;width:34px;height:34px;background:#2e2e2e;border-radius:4px"></div>
<div class="a" style="left:1673px;top:499px;width:34px;height:34px;background:#2e2e2e;border-radius:4px"></div>
<svg style="left:1639px;top:507px" width="18" height="19" viewBox="0 0 18 19"><path fill-rule="evenodd" d="M10.48 4.14 L13.65 7.31 L4.14 18.18 H-0.17 V14.1 Z M1.75 14.3 L10.15 5.9 L10.85 6.6 L2.45 15 Z" fill="#999999"/><path d="M14.6 0.3 L17.7 3.5 L15.5 6 L12.1 2.6 Z" fill="#999999"/></svg>
<svg style="left:1682px;top:507px" width="14" height="19" viewBox="0 0 14 19" fill="none" stroke="#999999"><path d="M4.6 3 V1.4 Q4.6 0.6 5.4 0.6 H8.6 Q9.4 0.6 9.4 1.4 V3" stroke-width="1.3"/><path d="M0.9 4 H13.1" stroke-width="2" stroke-linecap="round"/><path d="M1.9 5 L2.5 17 Q2.6 17.6 3.2 17.6 H10.8 Q11.4 17.6 11.5 17 L12.1 5" stroke-width="1.4"/><path d="M4.6 5 V15.2 M7 5 V15.2 M9.4 5 V15.2" stroke-width="1.1"/></svg>
<div class="t" style="left:285px;top:559.00px;font-size:14.490px;color:#f4f4f4;transform:scaleX(0.9662);transform-origin:0 0;letter-spacing:0.05px">4505441</div>
<div class="t" style="left:447px;top:559.00px;font-size:14.490px;color:#f4f4f4;transform:scaleX(0.9662);transform-origin:0 0;letter-spacing:0.05px">1002<span style="letter-spacing:0.75px">-</span>0.0<span style="letter-spacing:0.75px">-</span>0<span style="letter-spacing:0.75px">-</span>1</div>
<div class="t" style="left:662px;top:559.00px;font-size:14.490px;color:#f4f4f4;transform:scaleX(0.9662);transform-origin:0 0;letter-spacing:0.09px">Unbedingter Neustart</div>
<div class="t" style="left:985px;top:559.00px;font-size:14.490px;color:#f4f4f4;transform:scaleX(0.9662);transform-origin:0 0;letter-spacing:0.05px">1<span style="letter-spacing:0.75px">/</span>9<span style="letter-spacing:0.75px">/</span>2023 11:33:40 AM</div>
<div class="t" style="left:1189px;top:559.00px;font-size:14.490px;color:#f4f4f4;transform:scaleX(0.9662);transform-origin:0 0;letter-spacing:0.05px">1<span style="letter-spacing:0.75px">/</span>9<span style="letter-spacing:0.75px">/</span>2023 11:40:40 AM</div>
<svg style="left:1395px;top:557px" width="18" height="18" viewBox="0 0 18 18"><circle cx="9" cy="9" r="8.8" fill="#fff"/><path d="M5 5 L13 13 M13 5 L5 13" stroke="#141414" stroke-width="2.5" stroke-linecap="round"/></svg>
<div class="a" style="left:1502px;top:555px;width:59px;height:25px;background:#5eb02a;border-radius:4px"></div>
<div class="t" style="left:1507.6px;top:564.00px;font-size:10.350px;color:#fff;transform:scaleX(0.9662);transform-origin:0 0;">ausgeführt</div>
<div class="a" style="left:1631px;top:548px;width:34px;height:34px;background:#2e2e2e;border-radius:4px"></div>
<div class="a" style="left:1673px;top:548px;width:34px;height:34px;background:#2e2e2e;border-radius:4px"></div>
<svg style="left:1639px;top:556px" width="18" height="19" viewBox="0 0 18 19"><path fill-rule="evenodd" d="M10.48 4.14 L13.65 7.31 L4.14 18.18 H-0.17 V14.1 Z M1.75 14.3 L10.15 5.9 L10.85 6.6 L2.45 15 Z" fill="#999999"/><path d="M14.6 0.3 L17.7 3.5 L15.5 6 L12.1 2.6 Z" fill="#999999"/></svg>
<svg style="left:1682px;top:556px" width="14" height="19" viewBox="0 0 14 19" fill="none" stroke="#999999"><path d="M4.6 3 V1.4 Q4.6 0.6 5.4 0.6 H8.6 Q9.4 0.6 9.4 1.4 V3" stroke-width="1.3"/><path d="M0.9 4 H13.1" stroke-width="2" stroke-linecap="round"/><path d="M1.9 5 L2.5 17 Q2.6 17.6 3.2 17.6 H10.8 Q11.4 17.6 11.5 17 L12.1 5" stroke-width="1.4"/><path d="M4.6 5 V15.2 M7 5 V15.2 M9.4 5 V15.2" stroke-width="1.1"/></svg>
<div class="t" style="left:285px;top:608.00px;font-size:14.490px;color:#f4f4f4;transform:scaleX(0.9662);transform-origin:0 0;letter-spacing:0.05px">4497422</div>
<div class="t" style="left:447px;top:608.00px;font-size:14.490px;color:#f4f4f4;transform:scaleX(0.9662);transform-origin:0 0;letter-spacing:0.05px">1002<span style="letter-spacing:0.75px">-</span>0.0<span style="letter-spacing:0.75px">-</span>0<span style="letter-spacing:0.75px">-</span>1</div>
<div class="t" style="left:662px;top:608.00px;font-size:14.490px;color:#f4f4f4;transform:scaleX(0.9662);transform-origin:0 0;letter-spacing:0.09px">Unbedingter Neustart</div>
<div class="t" style="left:985px;top:608.00px;font-size:14.490px;color:#f4f4f4;transform:scaleX(0.9662);transform-origin:0 0;letter-spacing:0.05px">12<span style="letter-spacing:0.75px">/</span>20<span style="letter-spacing:0.75px">/</span>2022 2:18:15 PM</div>
<div class="t" style="left:1189px;top:608.00px;font-size:14.490px;color:#f4f4f4;transform:scaleX(0.9662);transform-origin:0 0;letter-spacing:0.05px">12<span style="letter-spacing:0.75px">/</span>20<span style="letter-spacing:0.75px">/</span>2022 2:19:15 PM</div>
<svg style="left:1395px;top:606px" width="18" height="18" viewBox="0 0 18 18"><circle cx="9" cy="9" r="8.8" fill="#fff"/><path d="M5 5 L13 13 M13 5 L5 13" stroke="#141414" stroke-width="2.5" stroke-linecap="round"/></svg>
<div class="a" style="left:1502px;top:604px;width:59px;height:25px;background:#5eb02a;border-radius:4px"></div>
<div class="t" style="left:1507.6px;top:613.00px;font-size:10.350px;color:#fff;transform:scaleX(0.9662);transform-origin:0 0;">ausgeführt</div>
<div class="a" style="left:1631px;top:597px;width:34px;height:34px;background:#2e2e2e;border-radius:4px"></div>
<div class="a" style="left:1673px;top:597px;width:34px;height:34px;background:#2e2e2e;border-radius:4px"></div>
<svg style="left:1639px;top:605px" width="18" height="19" viewBox="0 0 18 19"><path fill-rule="evenodd" d="M10.48 4.14 L13.65 7.31 L4.14 18.18 H-0.17 V14.1 Z M1.75 14.3 L10.15 5.9 L10.85 6.6 L2.45 15 Z" fill="#999999"/><path d="M14.6 0.3 L17.7 3.5 L15.5 6 L12.1 2.6 Z" fill="#999999"/></svg>
<svg style="left:1682px;top:605px" width="14" height="19" viewBox="0 0 14 19" fill="none" stroke="#999999"><path d="M4.6 3 V1.4 Q4.6 0.6 5.4 0.6 H8.6 Q9.4 0.6 9.4 1.4 V3" stroke-width="1.3"/><path d="M0.9 4 H13.1" stroke-width="2" stroke-linecap="round"/><path d="M1.9 5 L2.5 17 Q2.6 17.6 3.2 17.6 H10.8 Q11.4 17.6 11.5 17 L12.1 5" stroke-width="1.4"/><path d="M4.6 5 V15.2 M7 5 V15.2 M9.4 5 V15.2" stroke-width="1.1"/></svg>
<div class="t" style="left:285px;top:657.00px;font-size:14.490px;color:#f4f4f4;transform:scaleX(0.9662);transform-origin:0 0;letter-spacing:0.05px">4492693</div>
<div class="t" style="left:447px;top:657.00px;font-size:14.490px;color:#f4f4f4;transform:scaleX(0.9662);transform-origin:0 0;letter-spacing:0.05px">2698442<span style="letter-spacing:0.75px">-</span>0.0<span style="letter-spacing:0.75px">-</span>0<span style="letter-spacing:0.75px">-</span>1</div>
<div class="t" style="left:662px;top:657.00px;font-size:14.490px;color:#f4f4f4;transform:scaleX(0.9662);transform-origin:0 0;letter-spacing:0.09px">Unbedingter Neustart</div>
<div class="t" style="left:985px;top:657.00px;font-size:14.490px;color:#f4f4f4;transform:scaleX(0.9662);transform-origin:0 0;letter-spacing:0.05px">12<span style="letter-spacing:0.75px">/</span>16<span style="letter-spacing:0.75px">/</span>2022 7:30:38 PM</div>
<div class="t" style="left:1189px;top:657.00px;font-size:14.490px;color:#f4f4f4;transform:scaleX(0.9662);transform-origin:0 0;letter-spacing:0.05px">12<span style="letter-spacing:0.75px">/</span>16<span style="letter-spacing:0.75px">/</span>2022 8:33:06 PM</div>
<svg style="left:1395px;top:655px" width="18" height="18" viewBox="0 0 18 18"><circle cx="9" cy="9" r="8.8" fill="#fff"/><path d="M5 5 L13 13 M13 5 L5 13" stroke="#141414" stroke-width="2.5" stroke-linecap="round"/></svg>
<div class="a" style="left:1502px;top:653px;width:59px;height:25px;background:#5eb02a;border-radius:4px"></div>
<div class="t" style="left:1507.6px;top:662.00px;font-size:10.350px;color:#fff;transform:scaleX(0.9662);transform-origin:0 0;">ausgeführt</div>
<div class="a" style="left:1631px;top:646px;width:34px;height:34px;background:#2e2e2e;border-radius:4px"></div>
<div class="a" style="left:1673px;top:646px;width:34px;height:34px;background:#2e2e2e;border-radius:4px"></div>
<svg style="left:1639px;top:654px" width="18" height="19" viewBox="0 0 18 19"><path fill-rule="evenodd" d="M10.48 4.14 L13.65 7.31 L4.14 18.18 H-0.17 V14.1 Z M1.75 14.3 L10.15 5.9 L10.85 6.6 L2.45 15 Z" fill="#999999"/><path d="M14.6 0.3 L17.7 3.5 L15.5 6 L12.1 2.6 Z" fill="#999999"/></svg>
<svg style="left:1682px;top:654px" width="14" height="19" viewBox="0 0 14 19" fill="none" stroke="#999999"><path d="M4.6 3 V1.4 Q4.6 0.6 5.4 0.6 H8.6 Q9.4 0.6 9.4 1.4 V3" stroke-width="1.3"/><path d="M0.9 4 H13.1" stroke-width="2" stroke-linecap="round"/><path d="M1.9 5 L2.5 17 Q2.6 17.6 3.2 17.6 H10.8 Q11.4 17.6 11.5 17 L12.1 5" stroke-width="1.4"/><path d="M4.6 5 V15.2 M7 5 V15.2 M9.4 5 V15.2" stroke-width="1.1"/></svg>
<svg style="left:282px;top:710px" width="10" height="10" viewBox="0 0 10 10"><path d="M1 0 H2.3 V10 H1 Z M10 0 V10 L2.8 5 Z" fill="#6f6f6f"/></svg>
<svg style="left:322px;top:710px" width="8" height="10" viewBox="0 0 8 10"><path d="M8 0 V10 L0 5 Z" fill="#6f6f6f"/></svg>
<div class="a" style="left:345px;top:696px;width:38px;height:38px;border-radius:50%;background:#393c4a"></div>
<div class="t" style="left:360px;top:709.00px;font-size:14.490px;color:#a8a8ec;transform:scaleX(0.9662);transform-origin:0 0;">1</div>
<div class="t" style="left:397px;top:709.00px;font-size:14.490px;color:#fff;transform:scaleX(0.9662);transform-origin:0 0;">2</div>
<svg style="left:436px;top:710px" width="8" height="10" viewBox="0 0 8 10"><path d="M0 0 V10 L8 5 Z" fill="#ababab"/></svg>
<svg style="left:472px;top:710px" width="10" height="10" viewBox="0 0 10 10"><path d="M0.8 0 V10 L7.6 5 Z M8.5 0 H10 V10 H8.5 Z" fill="#ababab"/></svg>
<div class="a" style="left:505px;top:696px;width:80px;height:38px;background:#1c1c1c;border-radius:4px 4px 0 0;border-bottom:1px solid #8c8c8c"></div>
<div class="t" style="left:520.8px;top:708.00px;font-size:16.560px;color:#fff;transform:scaleX(0.9662);transform-origin:0 0;">10</div>
<svg style="left:566px;top:711.5px" width="10" height="7.5" viewBox="0 0 10 7.5"><path d="M0 0 H10 L5 7.5 Z" fill="#fff"/></svg>
<div class="t" style="left:593.4px;top:709.00px;font-size:14.490px;color:#bdbdbd;transform:scaleX(0.9662);transform-origin:0 0;">items per page</div>
<div class="t" style="left:1641.6px;top:709.00px;font-size:14.490px;color:#bdbdbd;transform:scaleX(0.9662);transform-origin:0 0;letter-spacing:0.15px">1 - 10 of 11 items</div>
</body></html>
